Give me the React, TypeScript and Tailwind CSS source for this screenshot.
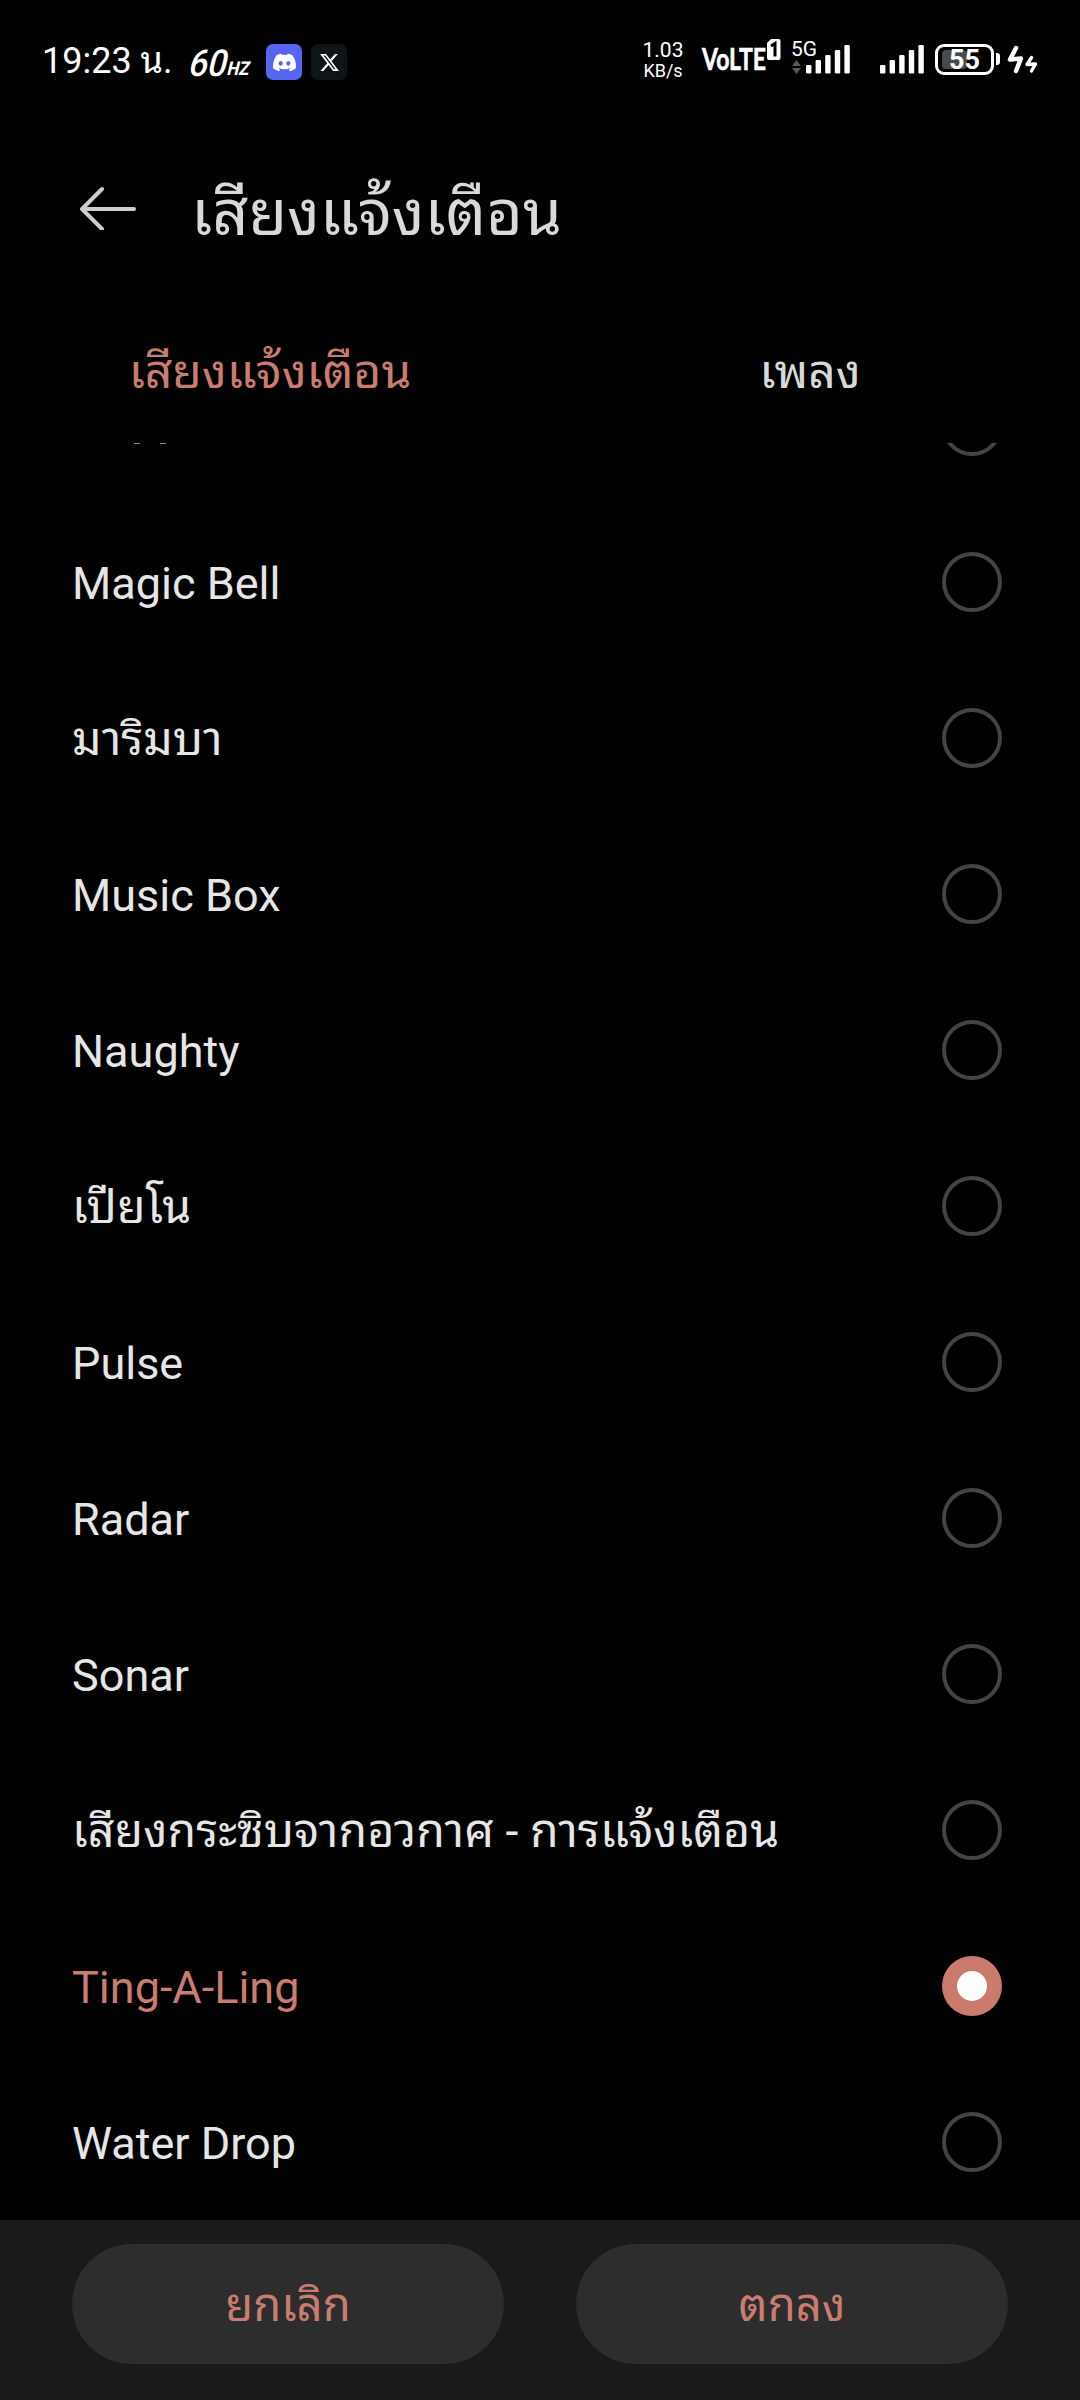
import { useState } from "react";
import { FaDiscord, FaXTwitter } from "react-icons/fa6";

const SOUNDS = [
  "Magic Bell",
  "มาริมบา",
  "Music Box",
  "Naughty",
  "เปียโน",
  "Pulse",
  "Radar",
  "Sonar",
  "เสียงกระซิบจากอวกาศ - การแจ้งเตือน",
  "Ting-A-Ling",
  "Water Drop",
];

// Thai glyphs run a bit narrower, so those names are set slightly larger
const isThai = (text: string) => /[\u0E00-\u0E7F]/.test(text);

function SignalBars() {
  return (
    <svg width="44" height="30" viewBox="0 0 44 30" fill="#fff">
      <rect x="0" y="21" width="5.4" height="8.5" rx="1.2" />
      <rect x="9.6" y="16" width="5.4" height="13.5" rx="1.2" />
      <rect x="19.2" y="11" width="5.4" height="18.5" rx="1.2" />
      <rect x="28.8" y="6" width="5.4" height="23.5" rx="1.2" />
      <rect x="38.4" y="1" width="5.4" height="28.5" rx="1.2" />
    </svg>
  );
}

function StatusBar() {
  return (
    <header className="flex h-[120px] items-start pl-[42px] text-white">
      <div className="mt-[39px] w-[138px] whitespace-nowrap text-[36px] leading-[44px]">
        19:23 น.
      </div>
      {/* refresh rate */}
      <svg className="mt-[36px]" width="76" height="52" viewBox="0 0 76 52">
        <g fill="#fff" fontFamily="Roboto" transform="skewX(-14)">
          <text x="17" y="40" fontSize="37" fontWeight="500" textLength="38" lengthAdjust="spacingAndGlyphs">60</text>
          <text x="56" y="39" fontSize="19" fontWeight="800" textLength="22" lengthAdjust="spacingAndGlyphs">HZ</text>
        </g>
      </svg>
      <div className="mt-[44px] ml-[10px] flex size-9 items-center justify-center rounded-[7px] bg-[#5865f2]">
        <FaDiscord size={25} />
      </div>
      <div className="mt-[44px] ml-[9px] flex size-9 items-center justify-center rounded-[7px] bg-[#0f1419]">
        <FaXTwitter size={21} />
      </div>

      <div className="mt-[38px] ml-[291px] w-[50px] text-center">
        <div className="text-[21px] leading-[25px]">1.03</div>
        <div className="-mt-[2px] text-[18px] leading-[20px]">KB/s</div>
      </div>
      <svg className="mt-[30px] ml-[14px] overflow-visible" width="80" height="52" viewBox="0 -8 80 52">
        <text x="0" y="32" fill="#fff" stroke="#fff" strokeWidth=".6" fontFamily="Lato" fontWeight="700" fontSize="30" textLength="64" lengthAdjust="spacingAndGlyphs">
          VoLTE
        </text>
        <path d="M69 1h7.5a2 2 0 0 1 2 2v17a2 2 0 0 1-2 2H67a2 2 0 0 1-2-2V5z" fill="#fff" />
        <path d="M69 8l4-2.500v13" fill="none" stroke="#000" strokeWidth="3" />
      </svg>
      <div className="relative mt-[44px] ml-[24px] h-[30px] w-[44px]">
        <SignalBars />
        <span className="absolute -top-[8px] -left-[15px] text-[21px] leading-[26px]">5G</span>
        <svg className="absolute top-[16px] -left-[14px]" width="9" height="14" viewBox="0 0 9 14" fill="#5a5a5a">
          <path d="M4.5 0L9 6H0zM4.5 14L0 8h9z" />
        </svg>
      </div>
      <div className="mt-[44px] ml-[30px]">
        <SignalBars />
      </div>
      <div className="relative mt-[44px] ml-[11px] flex h-[31px] w-[59px] items-center justify-center rounded-[9px] border-[3px] border-white">
        <div className="absolute top-[3px] left-[4px] h-[19px] w-[25px] rounded-[4px] bg-[#4a4a4a]" />
        <span className="relative pt-px text-[27px] leading-none font-bold">55</span>
      </div>
      <div className="mt-[53px] ml-[2px] h-[12px] w-[3.5px] rounded-r-[3px] bg-white" />
      <svg className="mt-[45px] ml-[7px]" width="31" height="30" viewBox="0 0 31 30" fill="none" stroke="#fff" strokeLinecap="round" strokeLinejoin="round">
        <path d="M9 3L3 14.5L14 13.5L9 26" strokeWidth="4.5" />
        <path d="M24.5 12.5L20 19.5L28.5 19L24.5 26" strokeWidth="3.4" />
      </svg>
    </header>
  );
}

function Radio({ checked }: { checked: boolean }) {
  return checked ? (
    <span className="flex size-[60px] items-center justify-center rounded-full bg-[#cb7b6e]">
      <span className="size-[30px] rounded-full bg-white" />
    </span>
  ) : (
    <span className="size-[60px] rounded-full border-4 border-[#444444]" />
  );
}

export default function App() {
  const [selected, setSelected] = useState("Ting-A-Ling");

  return (
    <div className="flex h-[2400px] w-[1080px] flex-col overflow-hidden bg-black font-[Roboto,'Noto_Sans_Thai_Looped','Noto_Looped_Thai',Loma,Garuda,Waree,Umpush,'Noto_Sans_Thai',sans-serif]">
      <StatusBar />

      <div className="flex h-[180px] items-start pl-[78px] text-[#d9d9d9]">
        <svg className="mt-[66px]" width="60" height="44" viewBox="0 0 60 44" fill="none" stroke="#cccccc" strokeWidth="4" strokeLinecap="round" strokeLinejoin="round">
          <path d="M56 23H4M24 3L4 23l20 20" />
        </svg>
        <h1 className="mt-[54px] ml-[53px] text-[63px] leading-[80px] whitespace-nowrap">เสียงแจ้งเตือน</h1>
      </div>

      <div className="flex h-[143px] text-[48px] leading-[60px] text-[#d9d9d9]">
        <button className="flex w-[540px] justify-center pt-[42px] text-[#c97c70]">เสียงแจ้งเตือน</button>
        <button className="flex w-[540px] justify-center pt-[42px]">เพลง</button>
      </div>

      <main className="flex h-[1777px] flex-col overflow-hidden">
        {/* row scrolled under the tabs */}
        <div className="flex h-[61px] shrink-0 items-start justify-between pr-[78px] pl-[134px]">
          <div className="flex gap-[20px]">
            <i className="h-px w-[6px] bg-[#888888]" />
            <i className="h-px w-[6px] bg-[#888888]" />
          </div>
          <div className="-mt-[47px] flex">
            <Radio checked={false} />
          </div>
        </div>
        {SOUNDS.map((name) => (
          <button
            key={name}
            onClick={() => setSelected(name)}
            className={`flex h-[156px] shrink-0 items-center justify-between pr-[78px] pl-[72px] text-left ${
              name === selected ? "text-[#c97c70]" : "text-[#e6e6e6]"
            }`}
          >
            <span className={isThai(name) ? "pt-[4px] text-[46.5px] tracking-[0.1px]" : "pt-[4px] text-[45px]"}>
              {name}
            </span>
            <Radio checked={name === selected} />
          </button>
        ))}
      </main>

      <footer className="flex h-[180px] shrink-0 items-start justify-between bg-[#1a1a1a] px-[72px] pt-[24px] text-[45.5px] text-[#c97c70]">
        <button className="h-[120px] w-[432px] rounded-full bg-[#2d2d2d] pt-[4px]">ยกเลิก</button>
        <button className="h-[120px] w-[432px] rounded-full bg-[#2d2d2d] pt-[4px]">ตกลง</button>
      </footer>
    </div>
  );
}
